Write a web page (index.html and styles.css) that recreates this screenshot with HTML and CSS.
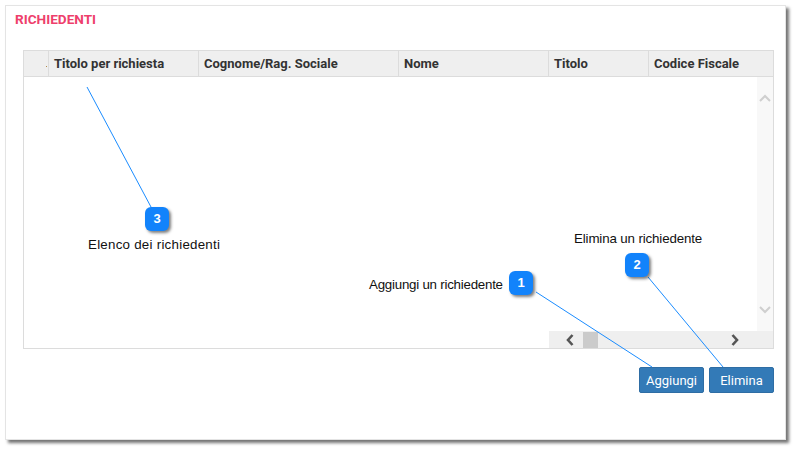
FILE: index.html
```html
<!DOCTYPE html>
<html lang="it">
<head>
<meta charset="utf-8">
<title>Richiedenti</title>
<link rel="stylesheet" href="styles.css">
</head>
<body>
<div class="panel">
  <div class="title">RICHIEDENTI</div>
  <div class="grid">
    <div class="head">
      <div class="hcell c0"><span class="dot"></span></div>
      <div class="hcell c1">Titolo per richiesta</div>
      <div class="hcell c2">Cognome/Rag. Sociale</div>
      <div class="hcell c3">Nome</div>
      <div class="hcell c4">Titolo</div>
      <div class="hcell c5">Codice Fiscale</div>
    </div>
    <div class="body">
      <div class="main">
        <div class="content"></div>
        <div class="vscroll">
          <svg class="chev" width="12" height="8" viewBox="0 0 12 8"><path d="M1 7 L6 2 L11 7" fill="none" stroke="#cfcfcf" stroke-width="2"/></svg>
          <svg class="chev" width="12" height="8" viewBox="0 0 12 8"><path d="M1 1 L6 6 L11 1" fill="none" stroke="#cfcfcf" stroke-width="2"/></svg>
        </div>
      </div>
      <div class="bottom">
        <div class="spacer"></div>
        <div class="hscroll">
          <svg class="hchev" width="8" height="12" viewBox="0 0 8 12"><path d="M6.5 1 L2 6 L6.5 11" fill="none" stroke="#555" stroke-width="2.6"/></svg>
          <div class="thumb"></div>
          <div class="track"></div>
          <svg class="hchev" width="8" height="12" viewBox="0 0 8 12"><path d="M1.5 1 L6 6 L1.5 11" fill="none" stroke="#555" stroke-width="2.6"/></svg>
        </div>
      </div>
    </div>
  </div>
  <div class="actions">
    <button class="btn">Aggiungi</button>
    <button class="btn">Elimina</button>
  </div>
</div>

<svg class="lines" width="796" height="449" viewBox="0 0 796 449">
  <line x1="87" y1="87" x2="151" y2="207" stroke="#1a8cff" stroke-width="1"/>
  <line x1="536" y1="292" x2="652" y2="367" stroke="#1a8cff" stroke-width="1"/>
  <line x1="648" y1="277" x2="723" y2="367" stroke="#1a8cff" stroke-width="1"/>
</svg>

<div class="badge b3">3</div>
<div class="badge b1">1</div>
<div class="badge b2">2</div>
<div class="note n3">Elenco dei richiedenti</div>
<div class="note n1">Aggiungi un richiedente</div>
<div class="note n2">Elimina un richiedente</div>
</body>
</html>
```

FILE: styles.css
```css
html, body {
  margin: 0;
  padding: 0;
  background: #ffffff;
}
body {
  position: relative;
  width: 796px;
  height: 449px;
  overflow: hidden;
  font-family: Roboto, "Liberation Sans", sans-serif;
}
.panel {
  box-sizing: border-box;
  margin: 5px 0 0 5px;
  width: 781px;
  height: 435px;
  border: 1px solid #e4e4e4;
  background: #fff;
  box-shadow: 3px 3px 3px rgba(0, 0, 0, 0.55);
  padding: 5px 0 0 0;
}
.title {
  margin-left: 9px;
  font-size: 13.6px;
  line-height: 16px;
  font-weight: 700;
  color: #ee3f6c;
}
.grid {
  box-sizing: border-box;
  margin: 23px 0 0 17px;
  width: 751px;
  height: 299px;
  border: 1px solid #dcdcdc;
  display: flex;
  flex-direction: column;
}
.head {
  display: flex;
  height: 25px;
  background: #efefef;
  border-bottom: 1px solid #dcdcdc;
  flex: none;
}
.hcell {
  box-sizing: border-box;
  display: flex;
  align-items: center;
  padding-left: 5px;
  font-size: 13px;
  font-weight: 700;
  color: #333;
  border-right: 1px solid #dcdcdc;
  white-space: nowrap;
  overflow: hidden;
}
.c0 { width: 25px; position: relative; padding: 0; }
.c1 { width: 150px; }
.c2 { width: 200px; }
.c3 { width: 150px; }
.c4 { width: 100px; }
.c5 { flex: 1; border-right: none; }
.dot {
  position: absolute;
  right: 1px;
  bottom: 9px;
  width: 1px;
  height: 1px;
  background: #b08a4a;
}
.body {
  flex: 1;
  display: flex;
  flex-direction: column;
}
.main {
  flex: 1;
  display: flex;
}
.content {
  flex: 1;
}
.vscroll {
  width: 16px;
  background: #f8f8f8;
  display: flex;
  flex-direction: column;
  justify-content: space-between;
  align-items: center;
  padding: 17px 0 17px 0;
}
.chev { display: block; }
.bottom {
  display: flex;
  height: 17px;
  flex: none;
}
.spacer { flex: 1; }
.hscroll {
  width: 224px;
  background: #efefef;
  display: flex;
  align-items: center;
}
.hchev { display: block; flex: none; }
.hscroll .hchev:first-child { margin-left: 17px; }
.hscroll .hchev:last-child { margin-right: 34px; }
.thumb {
  width: 15px;
  height: 16px;
  background: #cbcbcb;
  margin-left: 9px;
}
.track { flex: 1; }
.actions {
  display: flex;
  justify-content: flex-end;
  gap: 5px;
  margin-top: 18px;
  width: 768px;
}
.btn {
  box-sizing: border-box;
  width: 65px;
  height: 26px;
  background: #337ab7;
  border: 1px solid #2e6da4;
  border-radius: 2px;
  color: #fff;
  font-family: Roboto, "Liberation Sans", sans-serif;
  font-size: 13px;
  padding: 0;
}
.lines {
  position: absolute;
  left: 0;
  top: 0;
  pointer-events: none;
}
.badge {
  position: absolute;
  width: 24px;
  height: 24px;
  border-radius: 6px;
  background: #1283fb;
  color: #fff;
  font-family: "Liberation Sans", Arial, sans-serif;
  font-weight: 700;
  font-size: 13px;
  line-height: 24px;
  text-align: center;
  box-shadow: 2px 2px 3px rgba(0, 0, 0, 0.5);
}
.b3 { left: 145px; top: 207px; }
.b1 { left: 509px; top: 271px; }
.b2 { left: 625px; top: 253px; }
.note {
  position: absolute;
  font-family: "Liberation Sans", Arial, sans-serif;
  font-size: 13.33px;
  line-height: 16px;
  color: #111;
  white-space: nowrap;
}
.n3 { left: 88px; top: 237px; letter-spacing: 0.25px; }
.n1 { left: 369px; top: 277px; letter-spacing: -0.24px; }
.n2 { left: 574px; top: 231px; letter-spacing: -0.14px; }
```
